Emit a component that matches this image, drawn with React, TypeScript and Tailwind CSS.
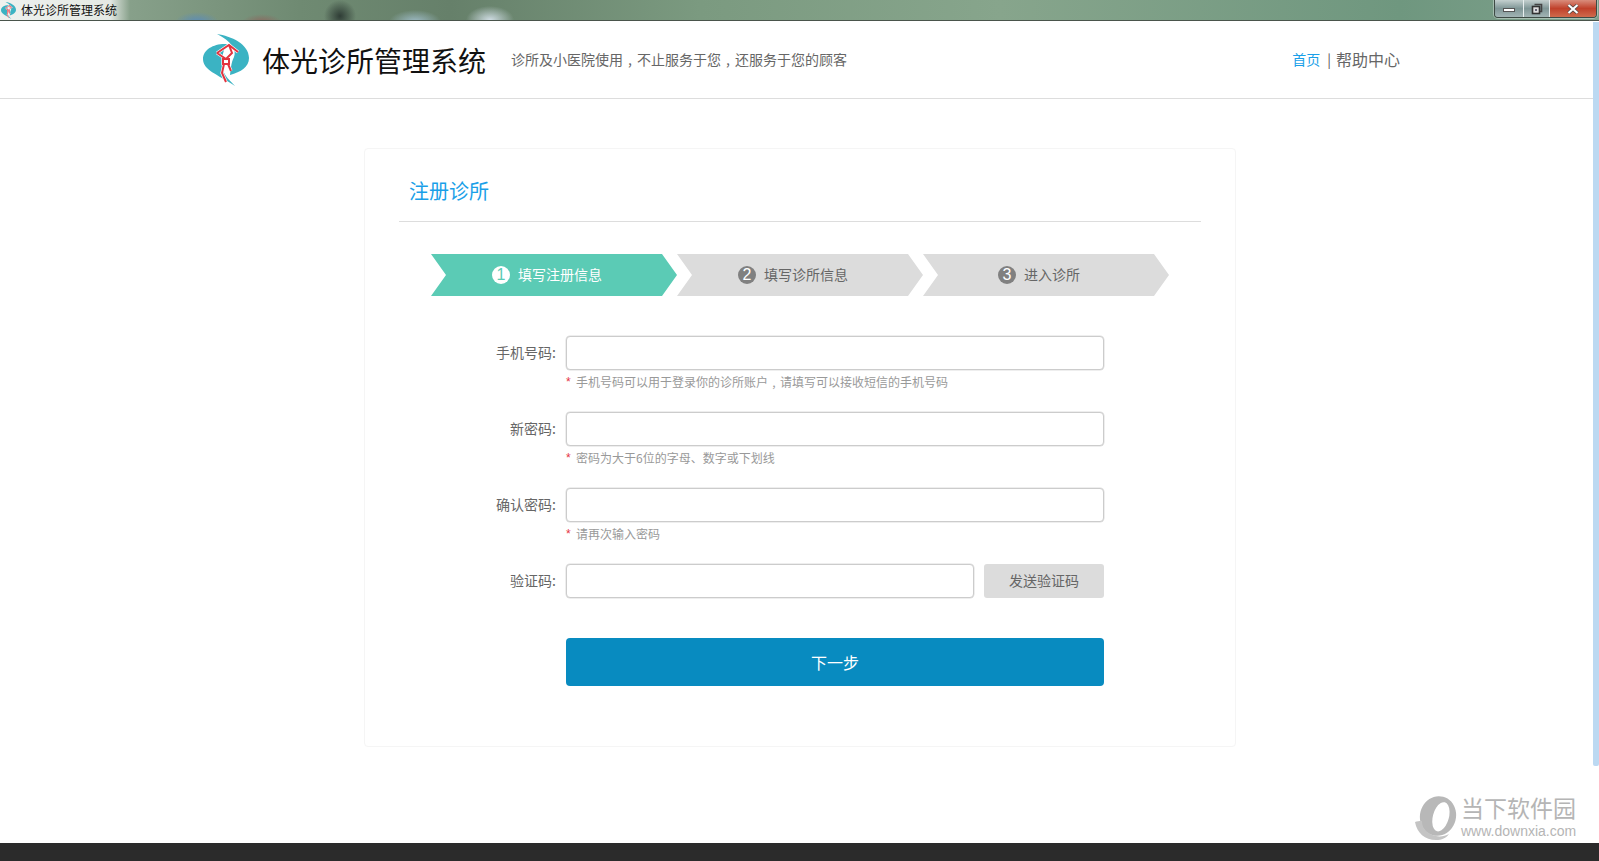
function Logo({ className }: { className: string }) {
  return (
    <svg viewBox="0 0 46 52" className={className}>
      <path d="M24 10C12 9 0 15 0 25C0 36 14 40 32 52C27 46 22 43 20 36C18 28 19 18 24 10Z" fill="#3bb3c3" />
      <path d="M14 0C28 2 46 10 46 24C46 33 38 38 27 41C28 34 28 29 31 23C34 16 28 7 14 0Z" fill="#3bb3c3" />
      <path d="M14 19L23 25L29 19L26 11M14 19L26 11L35 18M20 25H26V30H20ZM21 30L19 39L23 48M25 30L28 37" fill="none" stroke="#fff" strokeWidth="3.2" />
      <path d="M14 19L23 25L29 19L26 11M14 19L26 11L35 18M20 25H26V30H20ZM21 30L19 39L23 48M25 30L28 37" fill="none" stroke="#e2343f" strokeWidth="2" />
    </svg>
  );
}

function Comma() {
  return <span className="inline-block w-[1em] text-center">,</span>;
}

export default function App() {
  const steps = [
    { n: "1", t: "填写注册信息", on: true },
    { n: "2", t: "填写诊所信息", on: false },
    { n: "3", t: "进入诊所", on: false },
  ];
  const fields = [
    { l: "手机号码:", h: <>手机号码可以用于登录你的诊所账户<Comma />请填写可以接收短信的手机号码</> },
    { l: "新密码:", h: <>密码为大于6位的字母、数字或下划线</> },
    { l: "确认密码:", h: <>请再次输入密码</> },
  ];
  return (
    <div className="relative flex h-[861px] w-full flex-col overflow-hidden bg-white font-['Noto_Sans_CJK_SC','Liberation_Sans',sans-serif] text-[#666]">
      {/* window title bar */}
      <div className="flex h-[22px] shrink-0 items-start justify-between border-b border-b-white bg-[radial-gradient(ellipse_22px_10px_at_197px_22px,#5b8cb8,transparent),radial-gradient(ellipse_20px_8px_at_262px_22px,#8a6a60,transparent),radial-gradient(ellipse_16px_16px_at_340px_16px,#2f3d36,transparent),radial-gradient(ellipse_26px_12px_at_415px_22px,#9fbcc8,transparent),radial-gradient(ellipse_24px_14px_at_490px_20px,#cfdce3,transparent),linear-gradient(90deg,#eef1ee_0,#e4e9e4_110px,#87a08a_130px,#6f8a72_300px,#66806a_450px,#7b9a80_700px,#87a58c_1000px,#6f977f_1400px,#7ea08c_1599px)] shadow-[inset_0_-1px_0_#4a554c]">
        <div className="flex h-[20px] items-center">
          <Logo className="ml-px h-[17px] w-[15px]" />
          <span className="ml-[5px] text-[12px] leading-none text-[#111]">体光诊所管理系统</span>
        </div>
        <div className="mr-[2px] flex h-[18px] w-[103px] overflow-hidden rounded-b-[4px] border border-t-0 border-[#3d4a44] shadow-[0_0_0_1px_rgba(255,255,255,0.35)]">
          <div className="flex w-[29px] items-center justify-center border-r border-r-[#e8eeee] bg-[linear-gradient(180deg,#c4d0cf,#7f9696_50%,#a2b4b4)]">
            <div className="mt-[3px] h-[4px] w-[12px] border border-[#555] bg-white" />
          </div>
          <div className="flex w-[26px] items-center justify-center border-r border-r-[#e8eeee] bg-[linear-gradient(180deg,#c4d0cf,#7f9696_50%,#a2b4b4)]">
            <svg viewBox="0 0 12 12" className="h-[12px] w-[12px]">
              <path d="M3.5 1.5h7v7h-2" fill="none" stroke="#444" strokeWidth="1.6" />
              <rect x="1.5" y="3.5" width="7" height="7" fill="#ddd" stroke="#333" strokeWidth="1.6" />
              <rect x="4" y="6" width="2" height="2" fill="#667" />
            </svg>
          </div>
          <div className="flex flex-1 items-center justify-center bg-[linear-gradient(180deg,#d98d7c,#c0412b_50%,#cf6a4c)]">
            <svg viewBox="0 0 14 10" className="h-[10px] w-[14px]">
              <path d="M2.5 1L11.5 9M11.5 1L2.5 9" stroke="#444" strokeWidth="3.4" />
              <path d="M2.5 1L11.5 9M11.5 1L2.5 9" stroke="#fff" strokeWidth="2.2" />
            </svg>
          </div>
        </div>
      </div>

      {/* header */}
      <header className="flex h-[77px] shrink-0 items-center border-b border-b-[#dddddd] pl-[203px] pr-[199px]">
        <Logo className="h-[52px] w-[46px] shrink-0" />
        <h1 className="ml-[13px] text-[28px] font-normal leading-none text-[#111]">体光诊所管理系统</h1>
        <p className="ml-[25px] pb-[2px] text-[14px] leading-none text-[#666]">诊所及小医院使用<Comma />不止服务于您<Comma />还服务于您的顾客</p>
        <nav className="ml-auto flex items-center pb-[2px] leading-none">
          <a className="text-[14px] text-[#1a9fe8]">首页</a>
          <span className="ml-[7px] mr-[5px] text-[14px] text-[#555]">|</span>
          <a className="text-[16px] text-[#666]">帮助中心</a>
        </nav>
      </header>

      {/* main */}
      <main className="flex-1">
        <section className="ml-[364px] mt-[49px] h-[599px] w-[872px] rounded-[4px] border border-[#f5f5f5]">
          <div className="mx-[34px] flex h-[73px] items-center border-b border-b-[#dddddd] pl-[10px]">
            <h2 className="mt-[12px] text-[20px] font-normal leading-none text-[#1a9fe8]">注册诊所</h2>
          </div>
          <div className="ml-[66px] mt-[32px] flex">
            {steps.map((s) => (
              <div
                key={s.n}
                className={
                  "flex h-[42px] w-[246px] items-center justify-center gap-[8px] pb-[2px] pr-[14px] text-[14px] [clip-path:polygon(0_0,231px_0,246px_50%,231px_100%,0_100%,15px_50%)] " +
                  (s.on ? "bg-[#5bcbb5] text-white" : "bg-[#dcdcdc] text-[#666]")
                }
              >
                <span
                  className={
                    "mt-[2px] flex h-[18px] w-[18px] items-center justify-center rounded-full font-['Liberation_Sans',sans-serif] text-[16px] leading-none " +
                    (s.on ? "bg-white text-[#5bcbb5]" : "bg-[#808080] text-white")
                  }
                >
                  {s.n}
                </span>
                <span className="leading-none">{s.t}</span>
              </div>
            ))}
          </div>

          <form className="mt-[40px] flex flex-col">
            {fields.map((f) => (
              <div key={f.l} className="flex h-[76px] items-start">
                <label className="flex h-[34px] w-[191px] items-center justify-end pb-[2px] text-[14px] leading-none text-[#666]">{f.l}</label>
                <div className="ml-[10px] w-[538px]">
                  <input className="block h-[34px] w-full rounded-[4px] border border-[#cccccc] bg-white shadow-[0_0_0_0.5px_#ddd]" />
                  <p className="mt-[5px] flex items-center text-[12px] leading-[14px] text-[#999]">
                    <span className="w-[10px] font-['Liberation_Sans',sans-serif] text-[#e5333f]">*</span>
                    <span>{f.h}</span>
                  </p>
                </div>
              </div>
            ))}
            <div className="flex items-start">
              <label className="flex h-[34px] w-[191px] items-center justify-end pb-[2px] text-[14px] leading-none text-[#666]">验证码:</label>
              <div className="ml-[10px] flex w-[538px] justify-between">
                <input className="block h-[34px] w-[408px] rounded-[4px] border border-[#cccccc] bg-white shadow-[0_0_0_0.5px_#ddd]" />
                <button type="button" className="h-[34px] w-[120px] rounded-[3px] bg-[#dcdcdc] pb-[2px] text-[14px] text-[#666]">发送验证码</button>
              </div>
            </div>
            <div className="ml-[201px] mt-[40px] w-[538px]">
              <button type="button" className="h-[48px] w-full rounded-[4px] bg-[#088bc0] text-[16px] text-white">下一步</button>
            </div>
          </form>
        </section>
      </main>

      {/* footer */}
      <footer className="h-[18px] shrink-0 bg-[#2b2b2b]" />

      {/* scrollbar thumb */}
      <div className="absolute right-0 top-[22px] h-[744px] w-[6px] rounded-b-[2px] bg-[#bcd9f2]" />

      {/* watermark */}
      <div className="absolute left-[1414px] top-[795px] flex items-start">
        <svg viewBox="0 0 44 46" className="h-[46px] w-[44px]">
          <g transform="rotate(15 24 21)">
            <path fillRule="evenodd" d="M24 1a18 20 0 1 0 .01 0ZM27 6a8 15 0 1 0 .01 0Z" fill="#b8b8b8" />
          </g>
          <path d="M1 27C3 38 11 45 22 45C28 45 32 43 35 39C28 43 18 42 12 36C9 33 8 30 8 26C5 26 3 26 1 27Z" fill="#c4c4c4" />
        </svg>
        <div className="ml-[3px] flex flex-col">
          <span className="whitespace-nowrap text-[23px] leading-[24px] text-[#b5b5b5]">当下软件园</span>
          <span className="mt-[5px] whitespace-nowrap font-['Liberation_Sans',sans-serif] text-[14px] leading-[15px] text-[#b5b5b5]">www.downxia.com</span>
        </div>
      </div>
    </div>
  );
}
